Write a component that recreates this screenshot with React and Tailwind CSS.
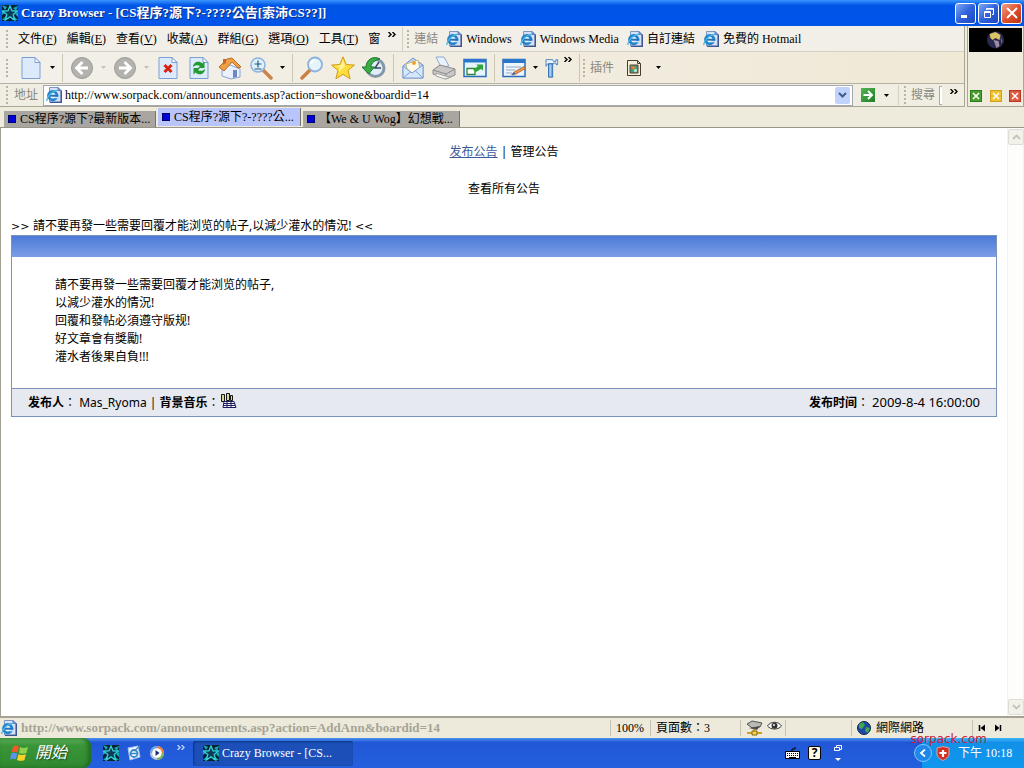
import React from 'react';

const SERIF = "font-['Liberation_Serif','Noto_Sans_CJK_TC',serif]";
const SANS = "font-['Noto_Sans','Noto_Sans_CJK_SC',sans-serif]";

function IeIcon({ className = 'h-4 w-4' }) {
  return (
    <svg viewBox="0 0 16 16" className={`${className} shrink-0`} aria-hidden="true">
      <path d="M3.500.5h8.500l3 3v11.500H3.500z" fill="#d3e2fa" stroke="#7c96c4" />
      <path d="M15.300 3.500v12H4" fill="none" stroke="#3f568f" strokeWidth="1.400" />
      <path d="M12 .5v3h3z" fill="#86a6df" stroke="#4b68ab" strokeWidth=".7" />
      <circle cx="6.700" cy="8.600" r="4.200" fill="#e9f7fd" stroke="#2484c8" strokeWidth="2.800" />
      <path d="M8 9.600h4.500v1.700H8z" fill="#d3e2fa" />
      <path d="M3.500 8.700h8.800" stroke="#2473b8" strokeWidth="2" />
      <path d="M1 14C0 11 6 3.500 12 3.400" fill="none" stroke="#4db4e6" strokeWidth="1.400" />
    </svg>
  );
}

function CrazyIcon({ className = 'h-4 w-4' }) {
  return (
    <svg viewBox="0 0 16 16" className={`${className} shrink-0`} aria-hidden="true">
      <path d="M0 0h16v16H0z" fill="#06262f" />
      <path d="M0 0l5 2-2 3zM16 1l-5 2 3 3zM0 15l4-4 1 4zM16 15l-5-4-1 4zM0 6l4 1-4 3zM16 7l-3 2 3 3z" fill="#18a8bc" />
      <path d="M8 1l2 4.800 5.500.2-4.300 3.400L12.700 15 8 11.900 3.300 15l1.500-5.600L.5 6l5.500-.2z" fill="#0a3c55" stroke="#36d0df" strokeWidth="1.300" />
    </svg>
  );
}

function Big({ label, children, className = 'w-[31px]' }) {
  return (
    <button aria-label={label} className={`${className} flex h-7 shrink-0 items-center justify-center`}>
      <svg viewBox="0 0 24 24" className="h-6 w-6" aria-hidden="true">{children}</svg>
    </button>
  );
}

function Arrow({ label, color = '#000' }) {
  return (
    <button aria-label={label} className="flex h-7 w-3 shrink-0 items-center justify-center">
      <svg viewBox="0 0 5 3" className="h-[3px] w-[5px]" aria-hidden="true"><path d="M0 0h5L2.500 3z" fill={color} /></svg>
    </button>
  );
}

const Sep = () => <div className="flex h-7 w-2 shrink-0 justify-center"><div className="w-px bg-[#cbc7b5]" /></div>;

const Grip = () => (
  <svg viewBox="0 0 3 18" className="h-[18px] w-[3px] shrink-0" aria-hidden="true">
    {[0, 4, 8, 12, 16].map((y) => <rect key={y} x="0" y={y} width="2" height="2" fill="#bab5a2" />)}
  </svg>
);

function More({ color = '#000', className = '' }) {
  return (
    <button aria-label="More" className={`${className} flex shrink-0 justify-center`}>
      <svg viewBox="0 0 8 5" className="h-[5px] w-2" aria-hidden="true">
        <path d="M.5 0L3 2.500.5 5M4.500 0L7 2.500 4.500 5" fill="none" stroke={color} strokeWidth="1.400" />
      </svg>
    </button>
  );
}

function WinButton({ label, red, children }) {
  return (
    <button aria-label={label} className={`flex h-[21px] w-[21px] items-center justify-center rounded-[3px] border border-white bg-linear-to-br ${red ? 'from-[#f0a088] via-[#e0502c] to-[#b83210]' : 'from-[#7fa6f4] via-[#2f62dc] to-[#1c48bf]'}`}>
      <svg viewBox="0 0 14 14" className="h-[14px] w-[14px]" aria-hidden="true">{children}</svg>
    </button>
  );
}

function MiniClose({ label, className }) {
  return (
    <button aria-label={label} className={`${className} flex h-3 w-3 items-center justify-center border`}>
      <svg viewBox="0 0 8 8" className="h-2 w-2" aria-hidden="true"><path d="M1 1l6 6M7 1L1 7" stroke="#fff" strokeWidth="1.500" /></svg>
    </button>
  );
}

const menus = [['文件', 'F'], ['編輯', 'E'], ['查看', 'V'], ['收藏', 'A'], ['群組', 'G'], ['選項', 'O'], ['工具', 'T']];

function TitleBar() {
  return (
    <header className="flex h-[26px] items-center bg-linear-to-b from-[#3a95ff] via-[#0055e6] via-20% to-[#0054ea] pr-0.5 pl-0.5">
      <CrazyIcon className="h-4 w-4" />
      <h1 className="ml-[3px] flex-1 truncate text-[13px] font-bold text-white [text-shadow:1px_1px_0_#0a2a80]">Crazy Browser - [CS程序?源下?-????公告[索沛CS??]]</h1>
      <div className="flex gap-0.5">
        <WinButton label="Minimize"><path d="M2 9h6v3H2z" fill="#fff" /></WinButton>
        <WinButton label="Restore"><path d="M4.500 4V2.500h7v6H10M2.500 5.500h6v6h-6zM2.500 6.500h6M4.500 3.200h7" fill="none" stroke="#fff" /></WinButton>
        <WinButton label="Close" red><path d="M2 2l10 10M12 2L2 12" stroke="#fff" strokeWidth="2" /></WinButton>
      </div>
    </header>
  );
}

function MenuRow() {
  return (
    <div className="flex h-[26px] items-center border-b border-[#d5d1c2] bg-[#f2efe9] pl-1.5">
      <Grip />
      <nav className="ml-[9px] flex shrink-0 gap-2.5">
        {menus.map(([t, k]) => <button key={k} className="whitespace-nowrap">{t}(<u>{k}</u>)</button>)}
        <button>窗</button>
      </nav>
      <More className="mb-2 ml-1.5 w-3" />
      <div className="mx-1 h-6 w-px shrink-0 bg-[#d5d1c2]" />
      <Grip />
      <span className="ml-1 shrink-0 text-[#8b887c]">連結</span>
      <nav className="ml-2 flex min-w-0 gap-2 overflow-hidden">
        {['Windows', 'Windows Media', '自訂連結', '免費的 Hotmail'].map((t) => (
          <a key={t} href="#" className="flex shrink-0 items-center gap-1"><IeIcon />{t}</a>
        ))}
      </nav>
    </div>
  );
}

const page = (
  <>
    <path d="M3 1.500h13l5 5v16H3z" fill="#dceafc" stroke="#7b9fd4" />
    <path d="M16 1.500v5h5z" fill="#fff" stroke="#7b9fd4" />
  </>
);

function ToolRow() {
  return (
    <div className="flex h-8 items-center overflow-hidden border-b border-[#b5b1a3] bg-linear-to-r from-[#f3f0ea] to-[#efe9d6] pl-1.5">
      <Grip />
      <div className="ml-1.5 flex shrink-0 items-center">
        <Big label="New">{page}</Big>
        <Arrow label="New menu" />
        <Sep />
        <Big label="Back"><circle cx="12" cy="12" r="10.500" fill="#b3b2ae" stroke="#9c9b97" /><path d="M12.500 6L6.500 12l6 6M7 12h11" fill="none" stroke="#fff" strokeWidth="2.800" /></Big>
        <Arrow label="Back menu" color="#c4c1b3" />
        <Big label="Forward"><circle cx="12" cy="12" r="10.500" fill="#b3b2ae" stroke="#9c9b97" /><path d="M11.500 6l6 6-6 6M17 12H6" fill="none" stroke="#fff" strokeWidth="2.800" /></Big>
        <Arrow label="Forward menu" color="#c4c1b3" />
        <Big label="Stop">{page}<path d="M8.500 9l7 7M15.500 9l-7 7" stroke="#d8230f" strokeWidth="3" /></Big>
        <Big label="Refresh">{page}<path d="M6 11c0-5 6-7 9.500-3.500L17.500 5.500V12H11l2-2C11 8.500 8 9 6 11zM18 13c0 5-6 7-9.500 3.500l-2 2V12H13l-2 2C13 15.500 16 15 18 13z" fill="#219a30" /></Big>
        <Big label="Home"><path d="M4 12l8-3 10 4v8l-9 2-9-3z" fill="#e9f1fc" stroke="#8aa5cf" /><path d="M1 11L9 3l5-1 9 9-3 1-6-6-8 9z" fill="#f0a044" stroke="#bb6c22" /><path d="M5 3h3v4L5 9z" fill="#cc6335" /><path d="M15 14h4v7l-4 1z" fill="#6b87c7" /></Big>
        <Big label="Zoom"><path d="M14 14l8 8" stroke="#c98546" strokeWidth="3.500" strokeLinecap="round" /><circle cx="9" cy="9" r="7" fill="#dff0fd" stroke="#8db2dc" strokeWidth="1.500" /><path d="M5.500 8h7M9 4.500v7M5.500 13h7" stroke="#24577a" strokeWidth="1.200" /></Big>
        <Arrow label="Zoom menu" />
        <Sep />
        <Big label="Search"><path d="M10 14l-8 8" stroke="#cb8044" strokeWidth="3.500" strokeLinecap="round" /><circle cx="15" cy="8.500" r="7" fill="#e4f4fe" stroke="#8db2dc" strokeWidth="1.800" /><path d="M11 8c0-2 2-4 4-4" stroke="#fff" fill="none" strokeWidth="2" /></Big>
        <Big label="Favorites"><path d="M12 .8l3.200 7.700 8.200.6-6.300 5.300 2 8.400-7.100-4.500-7.100 4.500 2-8.400L.6 9.100l8.200-.6z" fill="#ffdd3c" stroke="#d19b16" /><path d="M12 4l2 6-6 6 1-5-4-1 5-1z" fill="#fff3a0" /></Big>
        <Big label="History"><circle cx="13.500" cy="12" r="8.500" fill="#e1eef7" stroke="#8397a8" strokeWidth="3" /><path d="M17 6l-4 6h6" fill="none" stroke="#3c4c60" strokeWidth="1.500" /><path d="M18 3C11-1 4 4 4 11H0l6.500 7 6-7H9c0-4 4-7 9-8z" fill="#3aac45" stroke="#1d7930" /></Big>
        <Sep />
        <Big label="Mail"><path d="M2 10L12 2l10 7v13H2z" fill="#b9d4f6" stroke="#6e94cd" /><path d="M5 8l12-4 2 9-8 4-5-4z" fill="#fffbe8" stroke="#c4b88b" /><circle cx="13" cy="7" r="2" fill="#eea035" /><path d="M2 10l9 7 11-8v13H2z" fill="#d7e7fc" stroke="#7d9fd3" /><path d="M2 22l8-6.500M22 22l-8-7.500" stroke="#7d9fd3" /></Big>
        <Big label="Print"><path d="M4 1h8l5 9-8 1z" fill="#eaf2fe" stroke="#91a8d0" /><path d="M1 14l7-5 15 4v6l-9 4-13-5z" fill="#c9c8c6" stroke="#8c8b89" /><path d="M1 14l13 4 9-5M14 18v5" fill="none" stroke="#8c8b89" /><path d="M4 17l9 3 6 1-6 2-9-3z" fill="#f5f5f5" stroke="#a5a5a5" /></Big>
        <Big label="Full screen"><path d="M1 3.500h22v17H1z" fill="#e6f5fc" stroke="#2b6dbc" strokeWidth="1.500" /><path d="M1 3h22v3.500H1z" fill="#2b76cd" /><path d="M4 12.500h8v6H4z" fill="#fff" stroke="#31833a" strokeWidth="1.300" /><path d="M10 14l5-4-2-1.500h7v6L18 13l-5 3z" fill="#31a53a" /></Big>
        <Sep />
        <Big label="Edit"><path d="M1 3.500h22v17H1z" fill="#eef5fd" stroke="#2b6dbc" strokeWidth="1.500" /><path d="M1 3h22v4H1z" fill="#2b76cd" /><path d="M4 11h15M4 14h9M4 17h6" stroke="#93a8c5" /><path d="M12 16L22 10.500l1.500 2L14 18l-4 1z" fill="#e49a4c" stroke="#a85726" strokeWidth=".7" /><path d="M9 19l3-3 1.500 2z" fill="#3d62b7" /></Big>
        <Arrow label="Edit menu" />
        <Big label="Tools" className="w-5"><path d="M6 2h8l1 2h3V2h2v6h-2V6h-3v1H8L6 10z" fill="#eaf4fd" stroke="#3c73b6" /><path d="M9 7h5v16H9z" fill="#67b0ec" stroke="#2962a7" /><path d="M11 8v14" stroke="#d3efff" /></Big>
        <More className="mb-4 w-[14px]" />
        <Sep />
        <Grip />
        <span className="ml-1 text-[#8b887c]">插件</span>
        <button aria-label="Plug-ins" className="ml-3 flex h-7 w-4 items-center">
          <svg viewBox="0 0 16 16" className="h-4 w-4" aria-hidden="true"><path d="M1.500.5h10l3 3v12h-13z" fill="#f5efda" stroke="#463c34" /><path d="M11.500.5v3h3" fill="none" stroke="#463c34" /><path d="M4 5h8v8H4z" fill="#3a9a8c" stroke="#653d2b" /><path d="M4.500 5.500l6 2-4 2z" fill="#f08030" /><circle cx="9.500" cy="10.500" r="1.700" fill="#b5e4c0" /></svg>
        </button>
        <div className="ml-2.5 flex"><Arrow label="Plug-ins menu" /></div>
      </div>
    </div>
  );
}

function AddressRow() {
  return (
    <form className="flex h-[22px] items-center bg-[#f0ede2] pl-1.5" onSubmit={(e) => e.preventDefault()}>
      <Grip />
      <label htmlFor="address" className="mx-[5px] shrink-0 text-[#8b887c]">地址</label>
      <div className="flex h-[21px] min-w-0 flex-1 items-center border border-[#a3a9ae] bg-white pr-0.5 pl-0.5">
        <IeIcon />
        <input id="address" defaultValue="http://www.sorpack.com/announcements.asp?action=showone&boardid=14" className="ml-[3px] min-w-0 flex-1 bg-transparent outline-none" />
        <button aria-label="Address list" className="flex h-[17px] w-[15px] items-center justify-center rounded-xs bg-[#c1d3fb]">
          <svg viewBox="0 0 9 6" className="h-1.5 w-[9px]" aria-hidden="true"><path d="M1 1l3.500 3.500L8 1" fill="none" stroke="#425c8b" strokeWidth="2" /></svg>
        </button>
      </div>
      <button aria-label="Go" className="ml-2 flex h-[14px] w-[14px] items-center justify-center bg-linear-to-br from-[#54b552] to-[#1e7f25]">
        <svg viewBox="0 0 12 12" className="h-3 w-3" aria-hidden="true"><path d="M1.500 6h8M6 2l4 4-4 4" fill="none" stroke="#fff" strokeWidth="1.900" /></svg>
      </button>
      <div className="ml-[6px] flex"><Arrow label="Go menu" /></div>
      <div className="mx-[5px] h-5 w-px bg-[#d5d1c2]" />
      <Grip />
      <label htmlFor="find" className="ml-1 shrink-0 text-[#8b887c]">搜尋</label>
      <input id="find" className="ml-1 h-[19px] w-[3px] border border-r-0 border-[#a3a9ae] bg-white outline-none" />
      <More className="mr-1 mb-2 ml-1.5 w-3" />
    </form>
  );
}

function Chrome() {
  return (
    <div className="flex bg-[#efecde]">
      <div className="min-w-0 flex-1 border-r border-b border-[#aaa696]">
        <MenuRow />
        <ToolRow />
        <AddressRow />
      </div>
      <div className="ml-0.5 flex w-[57px] shrink-0 flex-col justify-between border border-t-0 border-[#aaa696] px-px pt-0.5 pb-1">
        <svg viewBox="0 0 52 24" className="h-6 w-full bg-black" aria-hidden="true">
          <circle cx="26" cy="12" r="8.500" fill="#28294e" />
          <path d="M20 6l6-2 5 3-1 5-4-2-3 2-2-2z" fill="#d9c465" />
          <path d="M24 12l5 1 1 5-3 2z" fill="#a08aa0" />
          <path d="M31 9l2 4-1 3z" fill="#7c6b92" />
        </svg>
        <div className="flex justify-between px-px">
          <MiniClose label="Close tab" className="border-[#2c7c1c] bg-[#4a9f31]" />
          <MiniClose label="Close others" className="border-[#d39f1a] bg-[#efc12d]" />
          <MiniClose label="Close all" className="border-[#b93722] bg-[#dc5840]" />
        </div>
      </div>
    </div>
  );
}

function Tabs() {
  const base = 'flex items-center gap-1 truncate border-r border-[#77746c] pl-1 text-left';
  const dot = <span className="h-2 w-2 shrink-0 border border-[#00006a] bg-[#0000d8]" />;
  return (
    <div className="flex h-[21px] items-end gap-0.5 border-b border-[#999588] bg-[#eeebdd] pl-1">
      <button className={`${base} h-4 w-[152px] bg-[#a9a6a2]`}>{dot}CS程序?源下?最新版本...</button>
      <button className={`${base} mb-px h-[18px] w-[143px] bg-[#b9c5fa]`}>{dot}CS程序?源下?-????公...</button>
      <button className={`${base} h-4 w-[157px] bg-[#a9a6a2]`}>{dot}【We & U Wog】幻想戰...</button>
    </div>
  );
}

function ScrollBar() {
  const b = 'flex h-4 w-4 items-center justify-center rounded-xs border border-[#deddd5] bg-[#f2f1ea]';
  return (
    <div className="flex w-[17px] shrink-0 flex-col justify-between border-x border-[#f3f2ee] bg-[#fdfdfb] py-px">
      <button aria-label="Scroll up" className={b}><svg viewBox="0 0 9 6" className="h-1.5 w-[9px]" aria-hidden="true"><path d="M1 5l3.500-3.500L8 5" fill="none" stroke="#c5c4b8" strokeWidth="1.800" /></svg></button>
      <button aria-label="Scroll down" className={b}><svg viewBox="0 0 9 6" className="h-1.5 w-[9px]" aria-hidden="true"><path d="M1 1l3.500 3.500L8 1" fill="none" stroke="#c5c4b8" strokeWidth="1.800" /></svg></button>
    </div>
  );
}

const lines = ['請不要再發一些需要回覆才能浏览的帖子,', '以減少灌水的情況!', '回覆和發帖必須遵守版规!', '好文章會有獎勵!', '灌水者後果自負!!!'];

const Colon = () => <span className="font-['Noto_Sans_CJK_TC',sans-serif]">：</span>;

const Mark = ({ children }) => <span className="font-['DejaVu_Sans',sans-serif] text-[11px]">{children}</span>;

function Content() {
  return (
    <main className={`${SANS} min-w-0 flex-1 px-2.5 pt-[15px] text-xs leading-[18px] text-black`}>
      <div className="flex flex-col items-center gap-[19px]">
        <p><a href="#" className="text-[#3a5a9c] underline">发布公告</a> | <a href="#">管理公告</a></p>
        <p><a href="#">查看所有公告</a></p>
      </div>
      <h2 className="mt-[19px] h-[18px]"><Mark>&gt;&gt; </Mark>請不要再發一些需要回覆才能浏览的帖子,以減少灌水的情況!<Mark> &lt;&lt;</Mark></h2>
      <article className="border border-[#7b93b8]">
        <div className="h-[21px] bg-linear-to-b from-[#4d7ad8] to-[#7b9ee6]" />
        <div className="pt-[19px] pr-11 pb-[22px] pl-[43px]">
          {lines.map((l) => <p key={l}>{l}</p>)}
        </div>
        <footer className="flex h-7 items-center justify-between border-t border-[#7b93b8] bg-[#e6e9ef] px-4">
          <div className="flex items-center">
            <p><b>发布人</b><Colon /> Mas_Ryoma | <b>背景音乐</b><Colon /></p>
            <svg viewBox="0 0 17 16" className="mb-1 h-4 w-[17px]" aria-hidden="true">
              <path d="M1.500 1.500h3v7h-3zM6.500.5h3v7h-3zM10.500 2.500h2v5h-2z" fill="#d8d69c" stroke="#151515" />
              <path d="M4 8.500h10l2 6H3z" fill="#fff" stroke="#1a1a62" />
              <path d="M4 10.500h11M3 12.500h12M7 9v5M11 9v5" stroke="#1a1a62" />
            </svg>
          </div>
          <p><b>发布时间</b><Colon /> <span className="text-[13px]">2009-8-4 16:00:00</span></p>
        </footer>
      </article>
    </main>
  );
}

function StatusBar() {
  const cell = 'flex h-4 shrink-0 items-center border-l border-[#c5c1b0] pl-[5px]';
  return (
    <div className="flex h-[22px] items-center border-t-2 border-[#a5a294] bg-[#edeadb]">
      <div className="flex min-w-0 flex-1 items-center gap-1 pl-px">
        <IeIcon />
        <span className="truncate text-[13px] font-bold text-[#a6a496]">http://www.sorpack.com/announcements.asp?action=AddAnn&amp;boardid=14</span>
      </div>
      <div className={`${cell} w-10`}>100%</div>
      <div className={`${cell} w-[90px]`}>頁面數：3</div>
      <div className={`${cell} w-[45px] gap-1`}>
        <svg viewBox="0 0 17 16" className="h-4 w-[17px]" aria-hidden="true"><path d="M1 4l5-3 10 2-2 4-8 1z" fill="#b8b8b4" stroke="#555" /><path d="M3 8l11-2-3 4z" fill="#4c4c4c" /><path d="M8 9v4M1 13h15" stroke="#c8a526" strokeWidth="2" /><path d="M6 11h5v4H6z" fill="#f2d646" stroke="#85691c" /></svg>
        <svg viewBox="0 0 15 10" className="mb-1 h-2.5 w-[15px]" aria-hidden="true"><path d="M.5 5c3-5 11-5 14 0-3 4-11 4-14 0z" fill="#fff" stroke="#333" /><circle cx="7.500" cy="4.800" r="3" fill="#333" /><circle cx="7" cy="4" r="1" fill="#fff" /></svg>
      </div>
      <div className={`${cell} w-[66px]`} />
      <div className={`${cell} w-[121px] gap-[5px]`}>
        <svg viewBox="0 0 14 14" className="h-[14px] w-[14px]" aria-hidden="true"><circle cx="7" cy="7" r="6.500" fill="#1a49a6" stroke="#0b2350" /><path d="M2 3l4-2 2 3-3 4-3-1zM9 6l4 1-2 5-3-2z" fill="#44a64a" /></svg>
        網際網路
      </div>
      <div className={`${cell} w-[52px] gap-2 pl-2`}>
        <button aria-label="Previous"><svg viewBox="0 0 8 8" className="h-2 w-2" aria-hidden="true"><path d="M1.500 1v6" stroke="#000" strokeWidth="1.500" /><path d="M7 .5v7L2.500 4z" fill="#000" /></svg></button>
        <button aria-label="Next"><svg viewBox="0 0 8 8" className="h-2 w-2" aria-hidden="true"><path d="M6.500 1v6" stroke="#000" strokeWidth="1.500" /><path d="M1 .5v7L5.500 4z" fill="#000" /></svg></button>
      </div>
    </div>
  );
}

function TaskBar() {
  return (
    <div className="relative flex h-[30px] items-center bg-linear-to-b from-[#4a90ee] via-[#2157d7] via-15% to-[#2460de] text-white">
      <button className="flex h-full w-[91px] items-center gap-1.5 rounded-r-lg bg-linear-to-b from-[#5fb35d] via-[#3a9438] via-25% to-[#2f8a2f] pl-2.5 text-base italic shadow-[inset_-3px_0_4px_#1f6b22] [text-shadow:1px_1px_1px_#1d4a1d]">
        <svg viewBox="0 0 19 18" className="h-[18px] w-[19px]" aria-hidden="true">
          <path d="M3 2.500C5 1 7 1.500 9 2.500L7.500 8.500c-2-1-4-1-6 0z" fill="#ee5a2a" />
          <path d="M10 3c2 1.200 5 1.200 8 0l-1.600 6c-3 1-5 1-7.400 0z" fill="#8fd14a" />
          <path d="M1.200 9.500c2-1 4-1 6 0L5.800 15.500c-2-1-4-1-5.800 0z" fill="#5a94f0" />
          <path d="M8.300 10.200c2 1 5 1 7.700 0l-1.600 6c-3 1-5 .8-7.400-.2z" fill="#fad02c" />
        </svg>
        開始
      </button>
      <div className="ml-3 flex items-center gap-[7px]">
        <button aria-label="Crazy Browser"><CrazyIcon /></button>
        <button aria-label="Mail">
          <svg viewBox="0 0 16 16" className="h-4 w-4" aria-hidden="true"><path d="M2 3l10-2 2 11-10 3z" fill="#f1f6ff" stroke="#9fc0f0" /><circle cx="8" cy="8.500" r="3.500" fill="none" stroke="#3787c6" strokeWidth="1.800" /><path d="M5 8.500h7M8 6l6-5" stroke="#3787c6" strokeWidth="1.300" /></svg>
        </button>
        <button aria-label="Media Player">
          <svg viewBox="0 0 16 16" className="h-4 w-4" aria-hidden="true"><circle cx="8" cy="8" r="7" fill="#b8c6dc" /><path d="M8 1a7 7 0 017 7H8z" fill="#ef7a30" /><path d="M15 8a7 7 0 01-7 7V8z" fill="#78b74a" /><path d="M1 8a7 7 0 017-7v7z" fill="#6da5e8" /><circle cx="8" cy="8" r="4.800" fill="#fff" /><path d="M6.500 5l4 3-4 3z" fill="#1b2d78" /></svg>
        </button>
      </div>
      <More color="#b9d2fa" className="mb-3 ml-2.5 w-3" />
      <button className="ml-1.5 flex h-[25px] w-40 items-center gap-[3px] rounded-xs bg-[#1c50b8] pl-2.5 text-xs shadow-[inset_1px_1px_2px_#0f347f]"><CrazyIcon />Crazy Browser - [CS...</button>
      <div className="ml-auto flex items-center gap-2">
        <svg viewBox="0 0 15 12" className="h-3 w-[15px]" aria-hidden="true"><path d="M.5 4.500h14v7H.5z" fill="#fff" stroke="#000" /><path d="M2 6.500h11M2 8.500h11" stroke="#000" strokeDasharray="1 1" /><path d="M4 10.500h7M7 4V2h3V0" fill="none" stroke="#000" /></svg>
        <span className="flex h-[14px] w-[13px] items-center justify-center rounded-xs border border-black bg-[#fffce4] font-sans text-[12px] leading-none font-bold text-black">?</span>
        <svg viewBox="0 0 10 18" className="ml-1 h-[18px] w-2.5" aria-hidden="true"><path d="M3.500 3V1.500h5v4H7M1.500 3.500h5v3h-5z" fill="none" stroke="#fff" /><path d="M2 14h6l-3 3z" fill="#fff" /></svg>
      </div>
      <div className="ml-[79px] flex h-full w-[102px] items-center gap-1 bg-linear-to-b from-[#3bb4f8] via-[#1290e8] via-15% to-[#0f97ee]">
        <button aria-label="Show hidden icons" className="-ml-2 flex h-[18px] w-[18px] items-center justify-center rounded-full border border-[#79c9fb] bg-[#1f86ea]">
          <svg viewBox="0 0 8 8" className="h-2 w-2" aria-hidden="true"><path d="M6 .5L2 4l4 3.500" fill="none" stroke="#fff" strokeWidth="1.800" /></svg>
        </button>
        <svg viewBox="0 0 14 15" className="h-[15px] w-[14px]" aria-hidden="true"><path d="M1 2l6-1.500L13 2v6c0 3-3 5-6 6.500C4 13 1 11 1 8z" fill="#d62f24" stroke="#dba4a0" /><path d="M7 4v7M3.500 7h7" stroke="#fff" strokeWidth="2.200" /></svg>
        <span className="ml-1 whitespace-nowrap">下午 10:18</span>
      </div>
      <span className="absolute -top-1.5 right-[37px] font-['DejaVu_Sans',sans-serif] text-[12px] leading-[14px] text-[#c8203c]">sorpack.com</span>
    </div>
  );
}

export default function App() {
  return (
    <div className={`${SERIF} flex min-h-screen flex-col bg-white text-xs leading-4 text-black`}>
      <TitleBar />
      <Chrome />
      <Tabs />
      <div className="flex flex-1 border-l border-[#a5a294] bg-white">
        <Content />
        <ScrollBar />
      </div>
      <StatusBar />
      <TaskBar />
    </div>
  );
}
